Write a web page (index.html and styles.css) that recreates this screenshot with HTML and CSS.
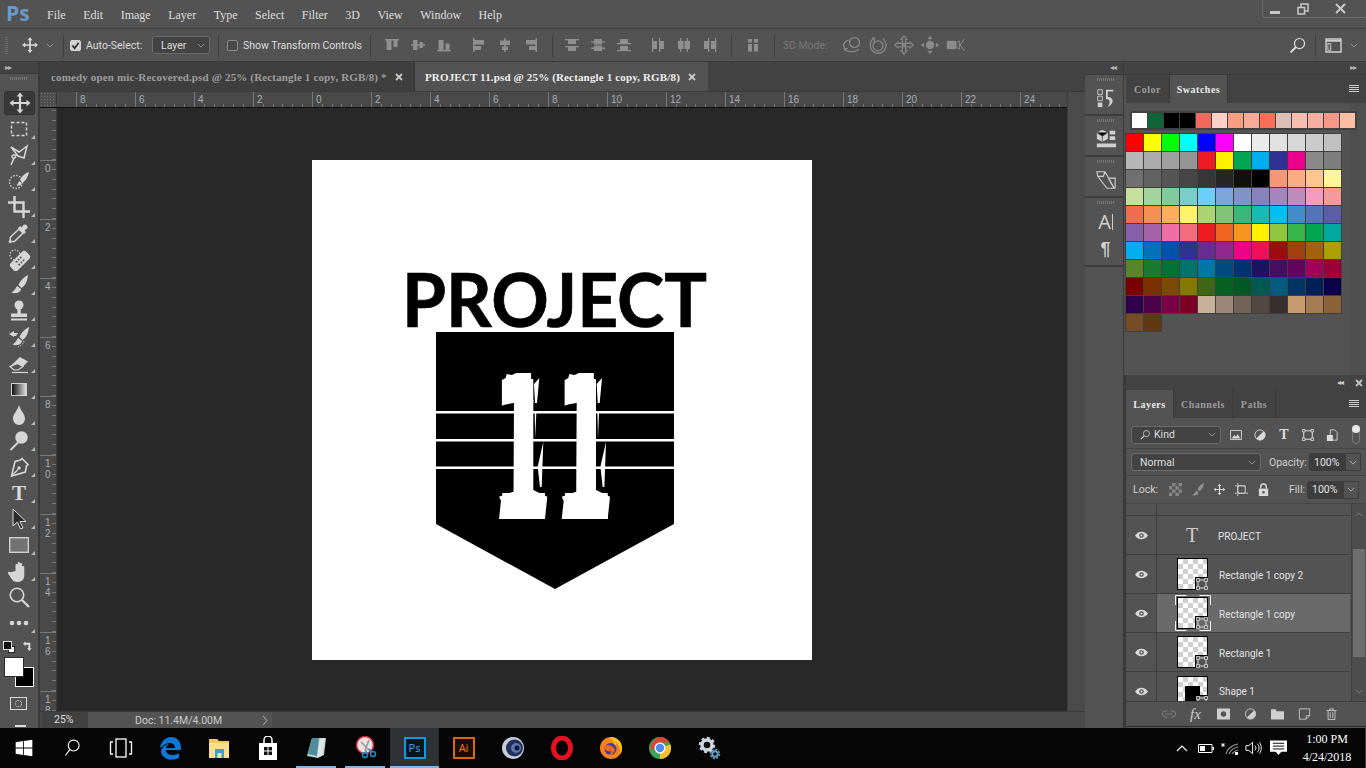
FILE: index.html
```html
<!DOCTYPE html>
<html lang="en">
<head>
<meta charset="utf-8">
<title>Photoshop - PROJECT 11.psd</title>
<link rel="stylesheet" href="styles.css">
</head>
<body>
<svg class="sprite" aria-hidden="true">
  <symbol id="move" viewBox="0 0 24 24"><path d="M12 1.5l3.4 4h-2.3V11h5.4V8.7l4 3.3-4 3.3V13h-5.4v5.5h2.3l-3.4 4-3.4-4h2.3V13H5.500v2.300l-4-3.300 4-3.300V11h5.400V5.500H8.600z" fill="currentColor"/></symbol>
  <symbol id="marquee" viewBox="0 0 24 24"><rect x="4.500" y="5.500" width="15" height="13" fill="none" stroke="currentColor" stroke-width="1.500" stroke-dasharray="3 2"/></symbol>
  <symbol id="lasso" viewBox="0 0 24 24"><path d="M4 4l8 5 8-6-3 12-6-2z" fill="none" stroke="currentColor" stroke-width="1.500"/><path d="M11 13c-2-2-7-1-6 1 1 2 5 1 3-1M7 15l-3 7" fill="none" stroke="currentColor" stroke-width="1.500"/></symbol>
  <symbol id="quick" viewBox="0 0 24 24"><circle cx="9" cy="13" r="6.500" fill="none" stroke="currentColor" stroke-width="1.300" stroke-dasharray="1.500 1.500"/><path d="M22 3c-4 1-8 5-9 8l2.500 2.500c3-1 5.500-6 6.500-10.500zM12.500 12c-1.500 1-1 3-3 4.500 2.500 .8 5-.5 5.300-2.500z" fill="currentColor"/></symbol>
  <symbol id="crop" viewBox="0 0 24 24"><path d="M7.500 1v15.500H23M1 7.500h15.500V23" fill="none" stroke="currentColor" stroke-width="2.400"/></symbol>
  <symbol id="dropper" viewBox="0 0 24 24"><path d="M12 8l4 4-8.500 8.500H4.300l-1 1-1-1 1-1v-3.200z" fill="none" stroke="currentColor" stroke-width="1.500"/><path d="M11 7l2-2 1.500 1.500 2-2.500c2-2 5.500 1.500 3.500 3.500l-2.500 2L19 11l-2 2z" fill="currentColor"/></symbol>
  <symbol id="heal" viewBox="0 0 24 24"><circle cx="8" cy="8" r="5" fill="none" stroke="currentColor" stroke-width="1.200" stroke-dasharray="1.400 1.400"/><rect x="2" y="9" width="22" height="10" rx="3" transform="rotate(-45 13 14)" fill="currentColor"/><g fill="#555" transform="rotate(-45 13 14)"><circle cx="10" cy="12" r="1"/><circle cx="13" cy="12" r="1"/><circle cx="16" cy="12" r="1"/><circle cx="10" cy="16" r="1"/><circle cx="13" cy="16" r="1"/><circle cx="16" cy="16" r="1"/></g></symbol>
  <symbol id="brush" viewBox="0 0 24 24"><path d="M21 2c-4 2-8 6-9.500 10l3 3c4-2 6-8 6.500-13zM10.500 13c-2 1-1.500 4-6 6.500 3.500 1.500 9 .5 9.500-3.500z" fill="currentColor"/></symbol>
  <symbol id="stamp" viewBox="0 0 24 24"><circle cx="12" cy="6" r="4.500" fill="currentColor"/><rect x="10.300" y="9" width="3.400" height="6" fill="currentColor"/><path d="M4 14.500h16v3.500H4zM4 19.500h16v2H4z" fill="currentColor"/></symbol>
  <symbol id="hist" viewBox="0 0 24 24"><path d="M22 2c-4 2-8 6-9.500 10l3 3c4-2 6-8 6.500-13zM11.500 13c-2 1-1.500 4-6 6.500 3.500 1.500 9 .5 9.500-3.500z" fill="currentColor"/><path d="M2 9l5-3v2h4l-2 3H7v1z" fill="currentColor"/><path d="M17 16c-1 3-3 5-6 6" fill="none" stroke="currentColor" stroke-dasharray="1.300 1.300"/></symbol>
  <symbol id="eraser" viewBox="0 0 24 24"><path d="M3 15.500L13 6l8 4.500-5 5z" fill="currentColor"/><path d="M3 15.500l4 3.500h4l5-3.500-5.500-3z" fill="#555" stroke="currentColor" stroke-width="1.200"/><path d="M5 21.500h16" stroke="currentColor" stroke-width="1.200"/></symbol>
  <symbol id="drop" viewBox="0 0 24 24"><path d="M12 2c1.500 6 6 8.500 6 14a6 6 0 0 1-12 0c0-5.500 4.500-8 6-14z" fill="currentColor"/></symbol>
  <symbol id="dodge" viewBox="0 0 24 24"><circle cx="14.500" cy="8.500" r="6.200" fill="currentColor"/><path d="M11 13.500L3.500 21" stroke="currentColor" stroke-width="2"/></symbol>
  <symbol id="pen" viewBox="0 0 24 24"><path d="M15 3.500l6 6-1.500 1.500-1.200 6L4.500 21 8 6.500l5.500-1.500z" fill="none" stroke="currentColor" stroke-width="1.600"/><path d="M5 20.500l6-6" stroke="currentColor" stroke-width="1.200"/><circle cx="12" cy="13" r="1.700" fill="currentColor"/></symbol>
  <symbol id="arrow" viewBox="0 0 24 24"><path d="M6 2v17l4.500-4 3 7 2.500-1-3-6.500h6z" fill="#2b2b2b" stroke="#d8d8d8" stroke-width="1"/></symbol>
  <symbol id="rectangle" viewBox="0 0 24 24"><rect x="2.700" y="4.700" width="18.600" height="14.600" fill="#727272" stroke="#cfcfcf" stroke-width="1.400"/></symbol>
  <symbol id="hand" viewBox="0 0 24 24"><path d="M8.500 12V6a1.100 1.100 0 0 1 2.200 0v5-7a1.100 1.100 0 0 1 2.200 0v7-6a1.100 1.100 0 0 1 2.200 0v7-4a1.100 1.100 0 0 1 2.200 0v8c0 5-3 7-7 7-3 0-4.500-1-6-3.500l-3.200-5c-.6-1.500 1.200-2.500 2.400-1.200z" fill="currentColor"/></symbol>
  <symbol id="zoom" viewBox="0 0 24 24"><circle cx="10" cy="10" r="6.700" fill="none" stroke="currentColor" stroke-width="1.600"/><path d="M15 15l7 7" stroke="currentColor" stroke-width="2.400"/></symbol>
  <symbol id="dots" viewBox="0 0 24 24"><circle cx="5" cy="12" r="2.300" fill="currentColor"/><circle cx="12" cy="12" r="2.300" fill="currentColor"/><circle cx="19" cy="12" r="2.300" fill="currentColor"/></symbol>
  <symbol id="chev" viewBox="0 0 10 6"><path d="M1 1l4 4 4-4" fill="none" stroke="currentColor"/></symbol>
  <symbol id="x" viewBox="0 0 8 8"><path d="M1 1l6 6M7 1L1 7" stroke="currentColor" stroke-width="1.800"/></symbol>
  <symbol id="al1" viewBox="0 0 14 14"><path d="M0 1h14v1.500H0zM1.500 2.500h5V12h-5zM8.500 2.500h4V9h-4z" fill="currentColor"/></symbol>
  <symbol id="al2" viewBox="0 0 14 14"><path d="M0 6.200h14v1.500H0zM2 2h4.500v10H2zM8.500 4H12v6H8.500z" fill="currentColor"/></symbol>
  <symbol id="al3" viewBox="0 0 14 14"><path d="M0 12h14v1.500H0zM1.500 2h5v10h-5zM8.500 5.500h4V12h-4z" fill="currentColor"/></symbol>
  <symbol id="al4" viewBox="0 0 14 14"><path d="M1 0h1.500v14H1zM2.500 2H12v4.500H2.500zM2.500 8H9v4H2.500z" fill="currentColor"/></symbol>
  <symbol id="al5" viewBox="0 0 14 14"><path d="M6.200 0h1.500v14H6.200zM2 2.500h10V7H2zM4 8.500h6V12H4z" fill="currentColor"/></symbol>
  <symbol id="al6" viewBox="0 0 14 14"><path d="M11.500 0H13v14h-1.500zM2 2h9.500v4.500H2zM5 8h6.500v4H5z" fill="currentColor"/></symbol>
  <symbol id="ds1" viewBox="0 0 14 14"><path d="M0 1h14v1.300H0zM3 2.300h8V6H3zM0 8h14v1.300H0zM3 9.300h8V13H3z" fill="currentColor"/></symbol>
  <symbol id="ds2" viewBox="0 0 14 14"><path d="M0 3.200h14v1.300H0zM3 1h8v5.500H3zM0 9.600h14v1.300H0zM3 7.500h8V13H3z" fill="currentColor"/></symbol>
  <symbol id="ds3" viewBox="0 0 14 14"><path d="M3 1h8v4H3zM0 5h14v1.300H0zM3 8h8v4H3zM0 12h14v1.300H0z" fill="currentColor"/></symbol>
  <symbol id="ds4" viewBox="0 0 14 14"><path d="M1 0h1.300v14H1zM2.300 3H6v8H2.300zM8 0h1.300v14H8zM9.300 3H13v8H9.300z" fill="currentColor"/></symbol>
  <symbol id="ds5" viewBox="0 0 14 14"><path d="M3 0h1.300v14H3zM1 3h5.500v8H1zM9.600 0h1.300v14H9.600zM7.500 3H13v8H7.500z" fill="currentColor"/></symbol>
  <symbol id="ds6" viewBox="0 0 14 14"><path d="M1 3h4v8H1zM5 0h1.300v14H5zM8 3h4v8H8zM12 0h1.300v14H12z" fill="currentColor"/></symbol>
  <symbol id="dsp" viewBox="0 0 14 14"><path d="M2 1h4v3.500H2zM8 1h4v3.500H8zM2 6h4v7.500H2zM8 6h4v7.500H8z" fill="currentColor"/></symbol>
  <symbol id="d3a" viewBox="0 0 24 24"><circle cx="15" cy="9" r="6" fill="none" stroke="currentColor" stroke-width="1.500"/><path d="M8 6c-4 1-7 5-6 8M3 17c3 4 14 4 17 0M2 13l1 4 4-1" fill="none" stroke="currentColor" stroke-width="1.500"/></symbol>
  <symbol id="d3b" viewBox="0 0 24 24"><circle cx="12" cy="13" r="6" fill="none" stroke="currentColor" stroke-width="1.500"/><path d="M7 4c-7 5-5 17 5 18 9 0 13-11 6-18M5 3l3 1-1 4" fill="none" stroke="currentColor" stroke-width="1.500"/></symbol>
  <symbol id="d3c" viewBox="0 0 24 24"><path d="M12 1l3.500 4H14v4l-2 2-2-2V5H8.500zM12 23l3.500-4H14v-4l-2-2-2 2v4H8.500zM1 12l4-3.500V10h4l2 2-2 2H5v1.500zM23 12l-4-3.500V10h-4l-2 2 2 2h4v1.500z" fill="none" stroke="currentColor" stroke-width="1.300"/></symbol>
  <symbol id="d3d" viewBox="0 0 24 24"><circle cx="12" cy="12" r="5" fill="currentColor"/><path d="M12 1l3 4H9zM12 23l3-4H9zM1 12l4-3v6zM23 12l-4-3v6z" fill="currentColor"/></symbol>
  <symbol id="d3e" viewBox="0 0 24 24"><rect x="1" y="7" width="11" height="10" fill="currentColor"/><path d="M12 10l4-3v10l-4-3zM22 5l-5 7 5 7" fill="none" stroke="currentColor" stroke-width="1.200"/></symbol>
  <symbol id="vec" viewBox="0 0 12 12"><path d="M2 2h8v8H2z" fill="none" stroke="#d9d9d9"/><path d="M.5 .5h3v3h-3zM8.500 .5h3v3h-3zM.5 8.500h3v3h-3zM8.500 8.500h3v3h-3z" fill="#535353" stroke="#d9d9d9" stroke-width=".8"/></symbol>
  <symbol id="eye" viewBox="0 0 16 12"><path d="M1 6c3-5.500 11-5.500 14 0-3 5.500-11 5.500-14 0z" fill="#dadada"/><circle cx="8" cy="6" r="2.500" fill="#535353"/><circle cx="8" cy="6" r="1.200" fill="#dadada"/></symbol>
  <symbol id="brackets" viewBox="0 0 36 36"><path d="M.5 10V.5h11M24.500 .5h11V10M35.500 26v9.500h-11M11.500 35.500H.5V26" fill="none" stroke="#f2f2f2"/></symbol>
</svg>

<div class="app">
  <header class="menubar">
    <span class="ps-logo">Ps</span>
    <nav class="menu"><span>File</span><span>Edit</span><span>Image</span><span>Layer</span><span>Type</span><span>Select</span><span>Filter</span><span>3D</span><span>View</span><span>Window</span><span>Help</span></nav>
    <div class="winctl">
      <svg class="wc wc-min" viewBox="0 0 10 4"><rect y="1" width="10" height="3" fill="currentColor"/></svg>
      <svg class="wc wc-max" viewBox="0 0 12 12"><path d="M1 4.500h6.500V11H1zM4 4V1h7v7H8" fill="none" stroke="currentColor" stroke-width="1.500"/></svg>
      <svg class="wc wc-x" viewBox="0 0 11 11"><path d="M1 1l9 9M10 1l-9 9" stroke="currentColor" stroke-width="2"/></svg>
    </div>
  </header>

  <div class="options">
    <i class="opt-grip"></i>
    <svg class="opt-move"><use href="#move"/></svg>
    <svg class="opt-chev"><use href="#chev"/></svg>
    <i class="sep sep-a"></i>
    <span class="check on"><svg viewBox="0 0 10 10"><path d="M1.500 5l2.500 3 4.500-6" fill="none" stroke="#333" stroke-width="2"/></svg></span>
    <span class="lbl lbl-auto">Auto-Select:</span>
    <span class="select sel-layer">Layer<svg><use href="#chev"/></svg></span>
    <i class="sep sep-b"></i>
    <span class="check"></span>
    <span class="lbl lbl-show">Show Transform Controls</span>
    <i class="sep sep-c"></i>
    <span class="aligns ml14"><svg><use href="#al1"/></svg><svg><use href="#al2"/></svg><svg><use href="#al3"/></svg></span>
    <span class="aligns ml21"><svg><use href="#al4"/></svg><svg><use href="#al5"/></svg><svg><use href="#al6"/></svg></span>
    <i class="sep sep-c"></i>
    <span class="aligns ml12"><svg><use href="#ds1"/></svg><svg><use href="#ds2"/></svg><svg><use href="#ds3"/></svg></span>
    <span class="aligns ml20"><svg><use href="#ds4"/></svg><svg><use href="#ds5"/></svg><svg><use href="#ds6"/></svg></span>
    <i class="sep sep-c"></i>
    <span class="aligns ml14"><svg><use href="#dsp"/></svg></span>
    <i class="sep sep-c"></i>
    <span class="lbl-3d">3D Mode:</span>
    <span class="modes"><svg><use href="#d3a"/></svg><svg><use href="#d3b"/></svg><svg><use href="#d3c"/></svg><svg><use href="#d3d"/></svg><svg><use href="#d3e"/></svg></span>
    <svg class="opt-search"><use href="#zoom"/></svg>
    <i class="sep sep-d"></i>
    <svg class="opt-work" viewBox="0 0 18 16"><path d="M1 1h16v14H1z" fill="none" stroke="currentColor" stroke-width="1.500"/><path d="M1 3h16" stroke="currentColor" stroke-width="2"/><rect x="3" y="6" width="3" height="7" fill="none" stroke="currentColor"/></svg>
    <svg class="opt-chev2"><use href="#chev"/></svg>
  </div>

  <div class="workspace">
    <aside class="tools">
      <div class="collapse"><span class="tri">▸▸</span></div>
      <i class="grip tool-grip"></i>
      <div class="tool active"><svg><use href="#move"/></svg></div>
      <div class="tool corner"><svg><use href="#marquee"/></svg></div>
      <div class="tool corner"><svg><use href="#lasso"/></svg></div>
      <div class="tool corner"><svg><use href="#quick"/></svg></div>
      <div class="tool corner"><svg><use href="#crop"/></svg></div>
      <div class="tool corner"><svg><use href="#dropper"/></svg></div>
      <div class="tool corner"><svg><use href="#heal"/></svg></div>
      <div class="tool corner"><svg><use href="#brush"/></svg></div>
      <div class="tool corner"><svg><use href="#stamp"/></svg></div>
      <div class="tool corner"><svg><use href="#hist"/></svg></div>
      <div class="tool corner"><svg><use href="#eraser"/></svg></div>
      <div class="tool corner"><i class="gradient"></i></div>
      <div class="tool corner"><svg><use href="#drop"/></svg></div>
      <div class="tool corner"><svg><use href="#dodge"/></svg></div>
      <div class="tool corner"><svg><use href="#pen"/></svg></div>
      <div class="tool corner"><span class="tool-t">T</span></div>
      <div class="tool corner"><svg><use href="#arrow"/></svg></div>
      <div class="tool corner"><svg><use href="#rectangle"/></svg></div>
      <div class="tool corner"><svg><use href="#hand"/></svg></div>
      <div class="tool"><svg><use href="#zoom"/></svg></div>
      <div class="tool corner"><svg><use href="#dots"/></svg></div>
      <div class="colors">
        <i class="mini-bg"></i><i class="mini-fg"></i>
        <svg class="swap" viewBox="0 0 12 12"><path d="M1 3l3-2.500V2h5v6h1.500L8 11 5.500 8H7V4H4v1.500z" fill="currentColor"/></svg>
        <i class="bgc"></i><i class="fgc"></i>
      </div>
      <div class="mask"><i><b></b></i></div>
      <div class="screenmode"></div>
    </aside>

    <main class="doc">
      <div class="tabs">
        <div class="tab"><span>comedy open mic-Recovered.psd @ 25% (Rectangle 1 copy, RGB/8) *</span><svg><use href="#x"/></svg></div>
        <div class="tab current"><span>PROJECT 11.psd @ 25% (Rectangle 1 copy, RGB/8)</span><svg><use href="#x"/></svg></div>
      </div>
      <div class="docbody">
        <div class="docview">
          <div class="hruler">
            <i class="rcorner"></i>
            <div class="hticks"><span>8</span><span>6</span><span>4</span><span>2</span><span>0</span><span>2</span><span>4</span><span>6</span><span>8</span><span>10</span><span>12</span><span>14</span><span>16</span><span>18</span><span>20</span><span>22</span><span>24</span></div>
          </div>
          <div class="vsplit">
            <div class="vruler"><i class="vstart"></i><span>0</span><span>2</span><span>4</span><span>6</span><span>8</span><span>1<br>0</span><span>1<br>2</span><span>1<br>4</span><span>1<br>6</span><span>1<br>8</span></div>
            <div class="pasteboard">
              <div class="artboard">
                <svg class="logo" viewBox="0 0 500 500">
                  <text class="logo-project" x="90" y="167" textLength="305" lengthAdjust="spacingAndGlyphs">PROJECT</text>
                  <polygon points="124,172 362,172 362,364 243,429 124,364"/>
                  <g fill="#fff">
                    <rect x="124" y="251" width="238" height="2.500"/>
                    <rect x="124" y="279" width="238" height="2.500"/>
                    <rect x="124" y="306.500" width="238" height="2.500"/>
                    <text class="logo-num" transform="translate(180.500 359) scale(.42 1)">11</text>
                    <g>
                      <polygon points="194.700,214 221.300,219.300 221.300,243.300 203,242.700 190.700,245 190.700,228.300"/>
                      <polygon points="202,240 221.300,240 221.300,335 201.500,335"/>
                      <polygon points="187,359 189,340.700 187,336.700 201.300,331.700 221.300,330 235.300,336.700 233,359"/>
                      <polygon points="227.300,218 222,224 223,243 225,243"/>
                      <polygon points="222.700,253 224.300,253 223.300,278"/>
                      <polygon points="231.300,281.700 225.700,306.700 228,327.300 229.700,326.700"/>
                    </g>
                    <g>
                      <polygon points="257.400,214 284,219.300 284,243.300 265.700,242.700 253.400,245 253.400,228.300"/>
                      <polygon points="264.700,240 284,240 284,335 264.200,335"/>
                      <polygon points="249.700,359 251.700,340.700 249.700,336.700 264,331.700 284,330 298,336.700 295.700,359"/>
                      <polygon points="290,218 284.700,224 285.700,243 287.700,243"/>
                      <polygon points="285.400,253 287,253 286,278"/>
                      <polygon points="294,281.700 288.400,306.700 290.700,327.300 292.400,326.700"/>
                    </g>
                  </g>
                </svg>
              </div>
            </div>
          </div>
        </div>
        <div class="vscroll"></div>
      </div>
      <div class="status">
        <span class="st-zoom">25%</span>
        <span class="st-doc">Doc: 11.4M/4.00M<svg viewBox="0 0 6 12"><path d="M1 1l4 5-4 5" fill="none" stroke="currentColor"/></svg></span>
      </div>
    </main>

    <aside class="dock">
      <div class="dock-top"><span class="arrows-l">◂◂</span></div>
      <div class="dock-group h40"><i class="grip"></i>
        <svg class="dock-ic" viewBox="0 0 24 24"><path d="M3 3h5v5H3zM3 10h5v5H3z" fill="none" stroke="currentColor"/><path d="M3 17h5v5H3z" fill="currentColor"/><path d="M12 3h8v2h-6v6c4 0 6 3 5 6-1 2-3 4-6 5 2-2 3-4 3-6s-2-3-4-3z" fill="currentColor"/></svg>
      </div>
      <div class="dock-group h40"><i class="grip"></i>
        <svg class="dock-ic" viewBox="0 0 24 24"><path d="M8 2l6 3v7l-6 3-6-3V5z" fill="currentColor"/><path d="M8 9v6M2 5l6 4 6-4" stroke="#555"/><path d="M16 3h6v4h-6zM16 9h6v4h-6zM2 17h21v4H2z" fill="currentColor"/></svg>
      </div>
      <div class="dock-group h40"><i class="grip"></i>
        <svg class="dock-ic" viewBox="0 0 24 24"><path d="M2 3h9l10 18H13L3 8zM2 3l1 5M11 3l-2 5H3M15 10h7v11M22 21h-7" fill="none" stroke="currentColor" stroke-width="1.200"/><path d="M15 11l5 9" stroke="currentColor"/></svg>
      </div>
      <div class="dock-group h68"><i class="grip"></i>
        <span class="dock-a">A<b></b></span>
        <span class="dock-p">¶</span>
      </div>
    </aside>

    <aside class="panels">
      <div class="panel-head"><span class="arrows-r">▸▸</span></div>
      <section class="swatches">
        <div class="ptabs">
          <span class="ptab t-color">Color</span>
          <span class="ptab t-swatches on">Swatches</span>
          <span class="burger"></span>
        </div>
        <div class="sw-body">
          <div class="recent">
            <i style="background:#fff"></i><i style="background:#0f6538"></i><i style="background:#000"></i><i style="background:#000"></i><i style="background:#f1695c"></i><i style="background:#fbd0c5"></i><i style="background:#f99f82"></i><i style="background:#f7ab99"></i><i style="background:#f66f58"></i><i style="background:#dcc0b3"></i><i style="background:#f9bcb0"></i><i style="background:#f6aea0"></i><i style="background:#f8968a"></i><i style="background:#f9bea4"></i>
          </div>
          <div class="swgrid">
            <i style="background:#f00"></i><i style="background:#ff0"></i><i style="background:#0f0"></i><i style="background:#0ff"></i><i style="background:#00f"></i><i style="background:#f0f"></i><i style="background:#fff"></i><i style="background:#ebebeb"></i><i style="background:#e1e1e1"></i><i style="background:#d7d7d7"></i><i style="background:#cbcbcb"></i><i style="background:#c0c0c0"></i>
            <i style="background:#b7b7b7"></i><i style="background:#acacac"></i><i style="background:#a0a0a0"></i><i style="background:#959595"></i><i style="background:#ed1c24"></i><i style="background:#fff200"></i><i style="background:#00a651"></i><i style="background:#00aeef"></i><i style="background:#2e3192"></i><i style="background:#ec008c"></i><i style="background:#898989"></i><i style="background:#7d7d7d"></i>
            <i style="background:#707070"></i><i style="background:#626262"></i><i style="background:#555"></i><i style="background:#464646"></i><i style="background:#363636"></i><i style="background:#262626"></i><i style="background:#111"></i><i style="background:#000"></i><i style="background:#f7977a"></i><i style="background:#fbad82"></i><i style="background:#fdc68c"></i><i style="background:#fff799"></i>
            <i style="background:#c6df9c"></i><i style="background:#a4d49d"></i><i style="background:#81ca9d"></i><i style="background:#7bcdc9"></i><i style="background:#6ccff7"></i><i style="background:#7ca6d8"></i><i style="background:#8293ca"></i><i style="background:#8881be"></i><i style="background:#a286bd"></i><i style="background:#bc8cbf"></i><i style="background:#f49bc1"></i><i style="background:#f5999d"></i>
            <i style="background:#f16c4d"></i><i style="background:#f68e54"></i><i style="background:#fbaf5a"></i><i style="background:#fff467"></i><i style="background:#acd372"></i><i style="background:#7dc473"></i><i style="background:#39b778"></i><i style="background:#16bcb4"></i><i style="background:#00bff3"></i><i style="background:#438ccb"></i><i style="background:#5573b7"></i><i style="background:#5e5ca7"></i>
            <i style="background:#855fa8"></i><i style="background:#a763a9"></i><i style="background:#ef6ea8"></i><i style="background:#f16d7e"></i><i style="background:#ee1d24"></i><i style="background:#f16522"></i><i style="background:#f7941d"></i><i style="background:#fff100"></i><i style="background:#8fc63d"></i><i style="background:#37b44a"></i><i style="background:#00a650"></i><i style="background:#00a99e"></i>
            <i style="background:#00aeef"></i><i style="background:#0072bc"></i><i style="background:#0054a5"></i><i style="background:#2f3192"></i><i style="background:#652c91"></i><i style="background:#91278f"></i><i style="background:#ed008c"></i><i style="background:#ee105a"></i><i style="background:#9d0a0f"></i><i style="background:#a1410d"></i><i style="background:#a36209"></i><i style="background:#aba000"></i>
            <i style="background:#588528"></i><i style="background:#197b30"></i><i style="background:#007236"></i><i style="background:#00736a"></i><i style="background:#0076a4"></i><i style="background:#004a80"></i><i style="background:#003370"></i><i style="background:#1d1363"></i><i style="background:#450e61"></i><i style="background:#62055f"></i><i style="background:#9e005c"></i><i style="background:#9d0039"></i>
            <i style="background:#790000"></i><i style="background:#7b3000"></i><i style="background:#7c4900"></i><i style="background:#827a00"></i><i style="background:#3e6617"></i><i style="background:#045f20"></i><i style="background:#005824"></i><i style="background:#005951"></i><i style="background:#005b7e"></i><i style="background:#003562"></i><i style="background:#002056"></i><i style="background:#0c004b"></i>
            <i style="background:#30004a"></i><i style="background:#4b0048"></i><i style="background:#7a0045"></i><i style="background:#7a0026"></i><i style="background:#c7b299"></i><i style="background:#998675"></i><i style="background:#736357"></i><i style="background:#534741"></i><i style="background:#362f2d"></i><i style="background:#c69c6d"></i><i style="background:#a67c52"></i><i style="background:#8c6239"></i>
            <i style="background:#754c24"></i><i style="background:#603913"></i>
          </div>
        </div>
      </section>
      <div class="panel-head2"><span class="ph-arrows">◂◂</span><svg><use href="#x"/></svg></div>
      <section class="layers">
        <div class="ptabs ptabs-l">
          <span class="ptab t-layers on">Layers</span>
          <span class="ptab t-channels">Channels</span>
          <span class="ptab t-paths">Paths</span>
          <span class="burger"></span>
        </div>
        <div class="l-row l-filter">
          <span class="select sel-kind"><svg class="kind-s"><use href="#zoom"/></svg>Kind<svg class="s-chev"><use href="#chev"/></svg></span>
          <span class="f-icons">
            <svg viewBox="0 0 14 12"><path d="M.7 .7h12.600v10.600H.7z" fill="none" stroke="currentColor"/><path d="M2 10l3-4 2 2 2-3 3 5z" fill="currentColor"/></svg>
            <svg viewBox="0 0 14 14"><circle cx="7" cy="7" r="6" fill="#555" stroke="currentColor"/><path d="M11.300 2.700a6 6 0 0 1-8.500 8.500z" fill="currentColor"/></svg>
            <span class="f-t">T</span>
            <svg viewBox="0 0 14 14"><path d="M2 2h10v10H2z" fill="none" stroke="currentColor" stroke-width="1.200"/><path d="M.5 .5h3v3h-3zM10.500 .5h3v3h-3zM.5 10.500h3v3h-3zM10.500 10.500h3v3h-3z" fill="#535353" stroke="currentColor"/></svg>
            <svg viewBox="0 0 14 14"><path d="M5 1h5l3 3v9H5z" fill="none" stroke="currentColor"/><path d="M1 7h7v7H1z" fill="currentColor"/></svg>
          </span>
          <span class="toggle"><b></b></span>
        </div>
        <div class="l-row l-blend">
          <span class="select sel-normal">Normal<svg class="s-chev"><use href="#chev"/></svg></span>
          <span class="lbl-r lbl-op">Opacity:</span>
          <span class="num">100%<i><svg><use href="#chev"/></svg></i></span>
        </div>
        <div class="l-row l-lock">
          <span class="lbl-r lbl-lock">Lock:</span>
          <span class="lock-icons">
            <svg viewBox="0 0 14 14"><path d="M0 0h14v14H0z" fill="#888"/><path d="M0 0h3.500v3.500H0zM7 0h3.500v3.500H7zM3.500 3.500H7V7H3.500zM10.500 3.500H14V7h-3.500zM0 7h3.500v3.500H0zM7 7h3.500v3.500H7zM3.500 10.500H7V14H3.500zM10.500 10.500H14V14h-3.500z" fill="#555"/></svg>
            <svg class="dim" viewBox="0 0 14 14"><path d="M14 0c-3 1-6 4-7 7l2 2c3-1.500 4.500-5.500 5-9zM6 8c-1.500 1-1 3-5 5 3 1.200 7 .5 7-3z" fill="currentColor"/></svg>
            <svg viewBox="0 0 24 24"><use href="#move"/></svg>
            <svg viewBox="0 0 14 14"><path d="M3 3h8v8H3z" fill="none" stroke="currentColor"/><path d="M3 0v14M0 11h14M0 3h9l2 2" fill="none" stroke="currentColor" stroke-dasharray="2 1"/></svg>
            <svg viewBox="0 0 14 14"><path d="M2 6h10v8H2z" fill="currentColor"/><path d="M4 6V4a3 3 0 0 1 6 0v2" fill="none" stroke="currentColor" stroke-width="1.500"/><circle cx="7" cy="10" r="1.300" fill="#555"/></svg>
          </span>
          <span class="lbl-r lbl-fill">Fill:</span>
          <span class="num">100%<i><svg><use href="#chev"/></svg></i></span>
        </div>
        <div class="l-list">
          <div class="l-items">
            <div class="layer l-partial"><span class="l-eye"></span><span class="l-main"></span></div>
            <div class="layer"><span class="l-eye"><svg><use href="#eye"/></svg></span><span class="l-main"><span class="l-tglyph">T</span><span class="l-name">PROJECT</span></span></div>
            <div class="layer"><span class="l-eye"><svg><use href="#eye"/></svg></span><span class="l-main"><span class="thumb"><svg class="badge"><use href="#vec"/></svg></span><span class="l-name">Rectangle 1 copy 2</span></span></div>
            <div class="layer sel"><span class="l-eye"><svg><use href="#eye"/></svg></span><span class="l-main"><span class="thumb"><svg class="badge"><use href="#vec"/></svg><svg class="corners"><use href="#brackets"/></svg></span><span class="l-name">Rectangle 1 copy</span></span></div>
            <div class="layer"><span class="l-eye"><svg><use href="#eye"/></svg></span><span class="l-main"><span class="thumb"><svg class="badge"><use href="#vec"/></svg></span><span class="l-name">Rectangle 1</span></span></div>
            <div class="layer l-cut"><span class="l-eye"><svg><use href="#eye"/></svg></span><span class="l-main"><span class="thumb"><i class="mini-shield"></i><svg class="badge"><use href="#vec"/></svg></span><span class="l-name">Shape 1</span></span></div>
          </div>
          <div class="l-scroll">
            <svg class="sc-up"><use href="#chev"/></svg>
            <i class="sc-thumb"></i>
            <svg class="sc-down"><use href="#chev"/></svg>
          </div>
        </div>
        <div class="l-foot">
          <svg class="dim2" viewBox="0 0 16 10"><path d="M6 1.500H4a3.500 3.500 0 0 0 0 7h2M10 1.500h2a3.500 3.500 0 0 1 0 7h-2M4 5h8" fill="none" stroke="currentColor"/></svg>
          <span class="fx">fx</span>
          <svg viewBox="0 0 14 12"><path fill-rule="evenodd" d="M0 0h14v12H0zM7 3a3 3 0 1 0 .01 0z" fill="currentColor"/></svg>
          <svg viewBox="0 0 14 14"><circle cx="7" cy="7" r="6" fill="#555" stroke="currentColor"/><path d="M11.300 2.700a6 6 0 0 1-8.500 8.500z" fill="currentColor"/></svg>
          <svg viewBox="0 0 14 12"><path d="M0 1h5l1 2h8v9H0z" fill="currentColor"/></svg>
          <svg viewBox="0 0 14 14"><path d="M1 1h12v8l-4 4H1z" fill="none" stroke="currentColor"/><path d="M13 9H9v4" fill="none" stroke="currentColor"/></svg>
          <svg viewBox="0 0 14 14"><path d="M1 3h12M5 3V1h4v2M3 3v10.500h8V3M5.500 5v7M8.500 5v7" fill="none" stroke="currentColor"/></svg>
        </div>
      </section>
    </aside>
  </div>

  <footer class="taskbar">
    <div class="tb-cell"><svg class="tb-ic start" viewBox="0 0 24 24"><path d="M2 5l9-1.300V11.500H2zM12 3.500l10-1.500v9.500H12zM2 12.500h9v7.800L2 19zM12 12.500h10V22l-10-1.500z" fill="#fff"/></svg></div>
    <div class="tb-cell"><svg class="tb-ic search" viewBox="0 0 24 24"><circle cx="14" cy="9" r="6.500" fill="none" stroke="#fff" stroke-width="1.300"/><path d="M9.500 14L4 21" stroke="#fff" stroke-width="1.400"/></svg></div>
    <div class="tb-cell tb-tv"><svg class="tb-ic" viewBox="0 0 24 24"><rect x="7" y="3" width="10" height="18" fill="none" stroke="#fff" stroke-width="1.300"/><path d="M4 6H1.500v12H4M20 6h2.500v12H20" fill="none" stroke="#fff" stroke-width="1.300"/></svg></div>
    <div class="tb-cell"><svg class="tb-ic" viewBox="0 0 24 24"><path d="M2 12C3 5 8 1 13 1c6 0 10 4 10 11v2H8c0 5 7 7 13 3v5c-6 3-14 2-17-3 0 0-1-2-1-4 1-4 4-6 7-7 1 0 0 1 0 1-1 .5-2 2-2 3h9c0-5-7-7-12-2z" fill="#0e78d5"/></svg></div>
    <div class="tb-cell"><svg class="tb-ic" viewBox="0 0 24 24"><path d="M2 3h8l2 2h10v17H2z" fill="#f3c95c"/><path d="M2 7h20v15H2z" fill="#fbe08c"/><path d="M8 13h9v9h-2.500v-5h-4v5H8z" fill="#30a3e6"/></svg></div>
    <div class="tb-cell"><svg class="tb-ic" viewBox="0 0 24 24"><path d="M3 7h18v17H3z" fill="#fff"/><path d="M8 7V4a4 4 0 0 1 8 0v3" fill="none" stroke="#fff" stroke-width="1.500"/><path d="M8 11h3.500v3.500H8zM12.500 11H16v3.500h-3.500zM8 15.500h3.500V19H8zM12.500 15.500H16V19h-3.500z" fill="#111"/></svg></div>
    <div class="tb-cell"><svg class="tb-ic" viewBox="0 0 24 24"><path d="M7 2h14l-2 17-6 3-11-2z" fill="#bcd3d9"/><path d="M7 2l-4 16 9 2 2-18z" fill="#4f8d9a"/><path d="M15 3h5l-3 16-5 2z" fill="#dce8e8"/></svg></div>
    <div class="tb-cell"><svg class="tb-ic" viewBox="0 0 24 24"><circle cx="11" cy="9" r="8.500" fill="#f2dfe0" stroke="#c8283a" stroke-width="1.500"/><path d="M7 6l9 9M15 4L11 14" stroke="#999" stroke-width="1.600"/><circle cx="11" cy="19" r="2.500" fill="none" stroke="#1c8fc8" stroke-width="1.500"/><circle cx="19" cy="18" r="2.500" fill="none" stroke="#1c8fc8" stroke-width="1.500"/><path d="M12 14l0 3M15 13l3 3" stroke="#1c8fc8" stroke-width="1.500"/></svg></div>
    <div class="tb-cell tb-active"><span class="app-tile app-ps">Ps</span></div>
    <div class="tb-cell"><span class="app-tile app-ai">Ai</span></div>
    <div class="tb-cell"><svg class="tb-ic" viewBox="0 0 24 24"><circle cx="12" cy="12" r="11" fill="#c8ccd6"/><circle cx="13.500" cy="12" r="8.500" fill="#20315f"/><circle cx="15" cy="12" r="5" fill="#5f77a9"/><circle cx="16" cy="12" r="2.500" fill="#111a38"/></svg></div>
    <div class="tb-cell"><svg class="tb-ic" viewBox="0 0 24 24"><ellipse cx="12" cy="12" rx="8.500" ry="10" fill="none" stroke="#e0131f" stroke-width="5"/></svg></div>
    <div class="tb-cell"><svg class="tb-ic" viewBox="0 0 24 24"><circle cx="12" cy="12" r="11" fill="#f7831d"/><path d="M12 1c6 0 11 5 11 11 0 3-1 5-2 7 1-5-1-10-4-12 0 1 0 2-1 3-1-4-3-7-6-8z" fill="#fbbf24"/><circle cx="11.500" cy="13" r="6" fill="#3d3fa0"/><path d="M2 9c2 1 5 1 7 0 3 0 6 2 7 5-1 4-5 6-8 5 3 0 5-2 4-4-2 1-5 0-6-2z" fill="#f36a1a"/></svg></div>
    <div class="tb-cell"><svg class="tb-ic" viewBox="0 0 24 24"><circle cx="12" cy="12" r="11" fill="#3aa757"/><path d="M12 12L22.500 8.500A11 11 0 0 1 12 23z" fill="#fbc02d"/><path d="M12 1a11 11 0 0 1 9.500 5.500H12L4.600 18A11 11 0 0 1 12 1z" fill="#db4437"/><path d="M1.500 15L8 12l-3 7z" fill="#3aa757"/><circle cx="12" cy="12" r="5.500" fill="#fff"/><circle cx="12" cy="12" r="4.200" fill="#4e8bf5"/></svg></div>
    <div class="tb-cell"><svg class="tb-ic" viewBox="0 0 24 24"><circle cx="10" cy="9" r="5" fill="none" stroke="#cfd8e0" stroke-width="3.500"/><circle cx="10" cy="9" r="7.200" fill="none" stroke="#cfd8e0" stroke-width="2" stroke-dasharray="3 2.600"/><circle cx="18" cy="18" r="2.700" fill="none" stroke="#69a0c4" stroke-width="2"/><circle cx="18" cy="18" r="4.500" fill="none" stroke="#69a0c4" stroke-width="1.500" stroke-dasharray="2 1.500"/></svg></div>
    <div class="tray">
      <svg class="t-up" viewBox="0 0 12 7"><path d="M1 6l5-5 5 5" fill="none" stroke="#fff" stroke-width="1.200"/></svg>
      <svg class="t-bat" viewBox="0 0 16 9"><path d="M.5 .5h13.500v8H.5z" fill="none" stroke="#fff"/><path d="M2 2h5v5H2z" fill="#fff"/><path d="M14.500 3H16v3h-1.500z" fill="#fff"/></svg>
      <svg class="t-wifi" viewBox="0 0 20 16"><path d="M1 5h4M3 3v4M1.600 3.500l2.800 3M4.400 3.500L1.600 6.500" stroke="#fff" stroke-width=".8"/><path d="M6 14c1-5 6-9 12-10M9 14c1-3 5-6 9-7M12 14c1-2 3-3 6-4" fill="none" stroke="#999" stroke-width="1.100"/><path d="M15 12h3v3h-3z" fill="#fff"/></svg>
      <svg class="t-vol" viewBox="0 0 18 14"><path d="M1 4.500h3L8 1v12L4 9.500H1z" fill="none" stroke="#fff"/><path d="M10.500 4.500c1.500 1.500 1.500 3.500 0 5M13 2.500c2.500 2.500 2.500 6.500 0 9M15 1c3 3 3 9 0 12" fill="none" stroke="#fff"/></svg>
      <svg class="t-note" viewBox="0 0 18 16"><path d="M0 0h18v12h-6l-3 3.500L6 12H0z" fill="#fff"/><path d="M3 3h12M3 6h12M3 9h12" stroke="#000"/></svg>
      <div class="clock"><span>1:00 PM</span><span>4/24/2018</span></div>
      <i class="show-desktop"></i>
    </div>
  </footer>
</div>
</body>
</html>
```
FILE: styles.css
```css
* { box-sizing: border-box; }
html, body { margin: 0; padding: 0; width: 1366px; height: 768px; overflow: hidden; background: #535353; }
i, b { display: block; font-style: normal; }
.sprite { display: none; }
.app { width: 1366px; height: 768px; display: flex; flex-direction: column; color: #d6d6d6; font-family: Roboto, "Liberation Sans", sans-serif; font-size: 10.5px; }

/* menu bar */
.menubar { height: 29px; flex: none; background: #535353; border-bottom: 1px solid #3c3c3c; display: flex; position: relative; }
.ps-logo { width: 47px; padding-left: 6px; font: 700 21px/26px "Open Sans", sans-serif; color: #6b9bcb; }
.menu { display: flex; gap: 17.5px; font: 12px/30px "Liberation Serif", serif; color: #dedede; }
.winctl { margin-left: auto; width: 104px; height: 18px; border-left: 1px solid #6a6a6a; border-bottom: 1px solid #6a6a6a; border-radius: 0 0 0 4px; display: flex; align-items: center; color: #c9c9c9; }
.wc { display: block; flex: none; }
.wc-min { width: 10px; height: 4px; margin: 6px 0 0 7px; }
.wc-max { width: 12px; height: 12px; margin: 0 0 0 17px; }
.wc-x { width: 11px; height: 11px; margin: 0 0 0 26px; }

/* options bar */
.options { height: 33px; flex: none; background: #535353; border-bottom: 1px solid #3c3c3c; display: flex; align-items: center; }
.opt-grip { width: 3px; height: 18px; margin-left: 5px; background: repeating-linear-gradient(0deg, #6c6c6c 0 1px, transparent 1px 2px); }
.opt-move { width: 18px; height: 18px; margin-left: 13px; color: #dcdcdc; }
.opt-chev { width: 8px; height: 5px; margin-left: 7px; color: #aaa; }
.sep { width: 1px; height: 23px; background: #3e3e3e; }
.sep-a { margin-left: 9px; }
.sep-b { margin-left: 8px; }
.sep-c { margin-left: 14px; }
.check { width: 11px; height: 11px; margin-left: 6px; border-radius: 2px; border: 1px solid #8c8c8c; background: #4a4a4a; display: block; }
.check.on { background: #d3d3d3; border-color: #d3d3d3; }
.check svg { display: block; width: 9px; height: 9px; }
.sep-b + .check { margin-left: 8px; }
.lbl { margin-left: 5px; color: #dcdcdc; white-space: nowrap; }
.lbl-auto { width: 53px; }
.lbl-show { width: 113px; }
.select { background: #434343; border: 1px solid #6b6b6b; border-radius: 3px; color: #dedede; display: flex; align-items: center; position: relative; }
.select svg { display: block; }
.sel-layer { width: 58px; height: 18px; margin-left: 13px; padding-left: 8px; }
.sel-layer svg { width: 8px; height: 5px; margin-left: auto; margin-right: 4px; color: #aaa; }
.aligns { display: flex; gap: 12px; color: #8f8f8f; }
.aligns svg { width: 14px; height: 14px; display: block; }
.ml12 { margin-left: 12px; }
.ml14 { margin-left: 14px; }
.ml20 { margin-left: 20px; }
.ml21 { margin-left: 21px; }
.lbl-3d { margin-left: 8px; width: 42px; color: #777; white-space: nowrap; }
.modes { display: flex; gap: 6px; margin-left: 17px; color: #8a8a8a; }
.modes svg { width: 20px; height: 20px; display: block; }
.opt-search { width: 18px; height: 18px; margin-left: auto; color: #dedede; transform: scaleX(-1); }
.sep-d { margin-left: 8px; }
.opt-work { width: 17px; height: 15px; margin-left: 9px; color: #cfcfcf; }
.opt-chev2 { width: 8px; height: 5px; margin: 0 8px 0 8px; color: #aaa; }

/* workspace */
.workspace { height: 666px; flex: none; display: flex; background: #3a3a3a; }

/* tool column */
.tools { width: 38px; flex: none; margin-right: 2px; background: #535353; color: #d6d6d6; display: flex; flex-direction: column; overflow: hidden; }
.collapse { height: 13px; background: #434343; border-bottom: 1px solid #3a3a3a; padding-left: 5px; }
.tri { display: block; font: 8px/11px "DejaVu Sans", sans-serif; color: #b8b8b8; letter-spacing: -1px; }
.grip { display: block; width: 18px; height: 4px; background: repeating-linear-gradient(90deg, #777 0 1px, transparent 1px 2px); }
.tool-grip { margin: 3px auto 11px; height: 3px; flex: none; }
.tool { height: 26px; flex: none; display: flex; align-items: center; justify-content: center; position: relative; }
.tool svg { width: 24px; height: 24px; display: block; }
.tool.active { height: 24px; margin: 0 3px 1px 4px; background: #383838; border: 1px solid #2f2f2f; border-radius: 3px; box-shadow: inset 0 0 0 1px #3f3f3f; }
.tool.corner::after { content: ""; position: absolute; right: 3px; bottom: 3px; border-style: solid; border-width: 0 0 4px 4px; border-color: transparent transparent #bbb transparent; }
.gradient { width: 16px; height: 13px; border: 1px solid #d2d2d2; background: linear-gradient(90deg, #111, #ddd); }
.tool-t { font: 700 21px/24px "Liberation Serif", serif; color: #d8d8d8; }
.colors { height: 53px; flex: none; position: relative; }
.mini-bg { position: absolute; left: 8px; top: 10px; width: 7px; height: 7px; background: #fff; border: 1px solid #222; }
.mini-fg { position: absolute; left: 4px; top: 6px; width: 7px; height: 7px; background: #111; outline: 1px solid #ddd; }
.swap { position: absolute; left: 22px; top: 5px; width: 11px; height: 11px; color: #ddd; }
.bgc { position: absolute; left: 15px; top: 31px; width: 19px; height: 20px; background: #000; border: 1px solid #fff; }
.fgc { position: absolute; left: 4px; top: 21px; width: 20px; height: 20px; background: #fff; border: 1px solid #2a2a2a; }
.mask { height: 29px; flex: none; padding: 8px 0 0 10px; }
.mask i { width: 17px; height: 13px; border: 1px solid #ddd; display: flex; align-items: center; justify-content: center; }
.mask b { width: 7px; height: 7px; border: 1px dotted #ddd; border-radius: 50%; }
.screenmode { width: 11px; height: 8px; margin: 7px 0 0 15px; border-top: 2px solid #ddd; flex: none; }

/* document */
.doc { width: 1045px; flex: none; display: flex; flex-direction: column; }
.tabs { height: 30px; flex: none; background: #424242; display: flex; border-bottom: 1px solid #3a3a3a; }
.tab { display: flex; align-items: center; height: 29px; padding: 1px 0 0 11px; font: 700 11px/28px "Liberation Serif", serif; letter-spacing: .15px; color: #9d9d9d; white-space: nowrap; }
.tab:first-child { width: 375px; background: #3f3f3f; border-right: 1px solid #333; }
.tab svg { width: 8px; height: 8px; margin-left: 8px; color: #c8c8c8; }
.tab.current { width: 293px; padding-left: 10px; background: #535353; color: #eee; }
.docbody { height: 619px; flex: none; display: flex; }
.docview { width: 1027px; flex: none; display: flex; flex-direction: column; }
.hruler { height: 16px; flex: none; display: flex; background: #494949; border-bottom: 1px solid #111; }
.rcorner { width: 17px; height: 15px; background: #4e4e4e; border-right: 1px solid #3a3a3a; background-image: radial-gradient(#777 .6px, transparent .7px); background-size: 3px 3px; }
.hticks { width: 1010px; height: 15px; overflow: hidden; display: flex; padding-left: 19px;
  background: repeating-linear-gradient(90deg, #777 0 1px, transparent 1px 9.833px) 19px 100% / 100% 3px no-repeat; }
.hticks span { flex: none; width: 59px; height: 15px; border-left: 1px solid #777; padding-left: 3px; font: 10px/15px "Liberation Sans", sans-serif; color: #a7aeb6; }
.vsplit { height: 603px; flex: none; display: flex; }
.vruler { width: 17px; flex: none; background: #494949 repeating-linear-gradient(180deg, #777 0 1px, transparent 1px 9.833px) 100% 2px / 4px 100% no-repeat; border-right: 1px solid #3a3a3a; overflow: hidden; font: 10px/11px "Liberation Sans", sans-serif; color: #a7aeb6; }
.vstart { height: 52px; }
.vruler span { display: block; height: 59px; border-top: 1px solid #777; padding: 2px 0 0 5px; }
.pasteboard { flex: 1; background: #282828; padding: 52px 0 0 255px; overflow: hidden; }
.artboard { width: 500px; height: 500px; background: #fff; }
.logo { display: block; width: 500px; height: 500px; }
.logo-project { font: 700 74px "Lato", sans-serif; fill: #000; stroke: #000; stroke-width: .7px; }
.logo-num { font: 700 199px "DejaVu Sans", sans-serif; letter-spacing: 10.7px; }
.vscroll { width: 18px; flex: none; background: #4b4b4b; border-left: 1px solid #3c3c3c; }
.status { height: 17px; flex: none; display: flex; background: #4a4a4a; border-top: 1px solid #3a3a3a; color: #ccc; }
.st-zoom { width: 46px; margin-left: 2px; background: #414141; padding-left: 12px; line-height: 15px; color: #ddd; }
.st-doc { width: 184px; background: #535353; padding-left: 47px; line-height: 15px; position: relative; display: flex; align-items: center; }
.st-doc svg { width: 6px; height: 11px; margin-left: auto; margin-right: 4px; color: #bbb; }

/* narrow dock */
.dock { width: 38px; flex: none; margin-right: 1px; background: #535353; display: flex; flex-direction: column; color: #d0d0d0; }
.dock-top { height: 13px; background: #434343; flex: none; border-bottom: 1px solid #3a3a3a; padding-left: 25px; }
.arrows-l, .arrows-r { display: block; font: 8px/11px "DejaVu Sans", sans-serif; color: #b8b8b8; letter-spacing: -1px; }
.arrows-r { margin-left: 226px; }
.dock-group { flex: none; border-bottom: 2px solid #3c3c3c; display: flex; flex-direction: column; align-items: center; padding-left: 3px; }
.h40 { height: 41px; }
.h68 { height: 69px; }
.dock-group .grip { margin-top: 3px; height: 3px; flex: none; }
.dock-ic { width: 22px; height: 22px; margin-top: 6px; display: block; }
.dock-a { font: 20px/22px "Open Sans", sans-serif; margin-top: 7px; display: flex; align-items: center; }
.dock-a b { width: 1px; height: 16px; margin-left: 1px; background: #ccc; }
.dock-p { font: 700 18px/20px "Liberation Sans", sans-serif; margin-top: 6px; }

/* panels */
.panels { width: 242px; flex: none; margin-left: 0; display: flex; flex-direction: column; background: #3a3a3a; }
.panel-head { height: 13px; flex: none; background: #434343; border-bottom: 1px solid #3a3a3a; }
.swatches { height: 300px; flex: none; background: #535353; }
.ptabs { height: 28px; margin-left: 2px; background: #424242; display: flex; position: relative; font: 700 10px/29px "Liberation Serif", serif; letter-spacing: .5px; color: #9d9d9d; }
.ptab { display: block; height: 28px; border-right: 1px solid #3a3a3a; text-align: center; }
.ptab.on { background: #535353; color: #e9e9e9; }
.t-color { width: 44px; }
.t-swatches { width: 58px; }
.t-layers { width: 48px; }
.t-channels { width: 59px; }
.t-paths { width: 43px; }
.burger { position: absolute; right: 7px; top: 10px; width: 10px; height: 8px; background: repeating-linear-gradient(180deg, #ccc 0 1px, transparent 1px 2px); }
.sw-body { height: 272px; background: linear-gradient(90deg, #535353 225px, #4f4f4f 225px); padding: 8px 0 0 2px; }
.recent { margin-left: 4px; width: 227px; height: 19px; background: #404040; padding: 2px; display: grid; grid-template-columns: repeat(14, 15px); column-gap: 1px; }
.recent i { height: 15px; }
.swgrid { margin-top: 4px; width: 216px; display: grid; grid-template-columns: repeat(12, 17px); grid-auto-rows: 17px; gap: 1px; padding-bottom: 1px; }
.swgrid i { outline: 1px solid #3f3f3f; }
.panel-head2 { height: 15px; flex: none; background: #434343; margin-left: 2px; display: flex; align-items: center; color: #cfcfcf; }
.ph-arrows { margin-left: 211px; font: 8px/12px "DejaVu Sans", sans-serif; letter-spacing: -1px; width: 14px; }
.panel-head2 svg { width: 8px; height: 8px; margin-left: 4px; color: #c4c4c4; }

.layers { height: 338px; flex: none; margin-left: 2px; background: #535353; display: flex; flex-direction: column; }
.layers .ptabs { margin-left: 0; flex: none; }
.l-row { flex: none; display: flex; align-items: center; border-bottom: 1px solid #454545; padding-left: 5px; }
.l-filter { height: 31px; padding-top: 3px; }
.l-blend { height: 27px; }
.l-lock { height: 28px; }
.sel-kind { width: 90px; height: 18px; padding-left: 8px; }
.kind-s { width: 11px; height: 11px; margin-right: 3px; transform: scaleX(-1); }
.s-chev { width: 8px; height: 5px; margin-left: auto; margin-right: 4px; color: #aaa; }
.sel-normal { width: 130px; height: 18px; padding-left: 8px; }
.f-icons { display: flex; align-items: center; margin-left: 9px; color: #dcdcdc; width: 110px; gap: 12px; }
.f-icons svg { width: 12px; height: 12px; display: block; flex: none; }
.f-t { width: 12px; font: 700 14px/14px "Liberation Serif", serif; text-align: center; }
.toggle { width: 8px; height: 18px; border: 1px solid #7a7a7a; border-radius: 5px; margin-left: 12px; position: relative; }
.toggle b { position: absolute; left: -1px; top: -2px; width: 8px; height: 8px; border-radius: 50%; background: #e8e8e8; }
.lbl-r { color: #cfcfcf; white-space: nowrap; }
.lbl-op { margin-left: 8px; width: 40px; }
.lbl-lock { margin-left: 2px; width: 36px; }
.lbl-fill { margin-left: 13px; width: 18px; }
.num { width: 52px; height: 18px; background: #3d3d3d; border-radius: 3px; display: flex; align-items: center; padding-left: 5px; color: #e4e4e4; }
.num i { margin-left: auto; width: 16px; height: 18px; background: #535353; border: 1px solid #3d3d3d; display: flex; align-items: center; justify-content: center; color: #c4c4c4; }
.num svg { width: 8px; height: 5px; display: block; }
.lock-icons { display: flex; gap: 9px; width: 107px; align-items: center; color: #d9d9d9; }
.lock-icons svg { width: 13px; height: 13px; flex: none; display: block; }
.lock-icons .dim { color: #8f8f8f; }
.l-list { height: 197px; flex: none; display: flex; overflow: hidden; }
.l-items { width: 224px; flex: none; display: flex; flex-direction: column; }
.layer { height: 39px; flex: none; display: flex; border-bottom: 1px solid #3f3f3f; }
.l-partial { height: 12px; }
.l-cut { height: 29px; border-bottom: 0; overflow: hidden; align-items: flex-start; }
.l-eye { width: 31px; flex: none; height: 100%; border-right: 1px solid #3f3f3f; display: flex; align-items: center; justify-content: center; }
.l-eye svg { width: 15px; height: 11px; }
.l-main { flex: 1; display: flex; align-items: center; padding-left: 20px; height: 100%; }
.layer.sel .l-main { background: #6a6a6a; }
.l-tglyph { width: 30px; text-align: center; font: 400 20px/22px "Liberation Serif", serif; color: #cdcdcd; }
.l-name { margin-left: 11px; padding-top: 2px; font-size: 10px; color: #e2e2e2; white-space: nowrap; }
.thumb { width: 31px; height: 32px; flex: none; position: relative; border: 1px solid #000; background: #fff repeating-conic-gradient(#cfcfcf 0 25%, #fff 0 50%) 0 0 / 10px 10px; }
.badge { position: absolute; right: -1px; bottom: -1px; width: 13px; height: 13px; background: #535353; border: 1px solid #000; border-width: 1px 0 0 1px; }
.sel .badge { background: #6a6a6a; }
.corners { position: absolute; left: -3px; top: -3px; width: 36px; height: 36px; }
.mini-shield { position: absolute; left: 7px; top: 9px; width: 15px; height: 16px; background: #000; }
.l-cut .l-main { align-items: flex-start; padding-top: 4px; }
.l-cut .l-eye { align-items: flex-start; padding-top: 14px; height: 29px; }
.l-cut .l-name { margin-top: 8px; }
.l-scroll { width: 15px; flex: none; margin-left: 1px; background: #4d4d4d; border-left: 1px solid #3f3f3f; position: relative; color: #8b8b8b; }
.sc-thumb { position: absolute; left: 1px; top: 45px; width: 12px; height: 108px; background: #6e6e6e; }
.sc-up, .sc-down { position: absolute; left: 3px; width: 8px; height: 5px; }
.sc-up { top: 8px; transform: rotate(180deg); }
.sc-down { top: 185px; }
.l-foot { height: 26px; flex: none; border-top: 1px solid #3f3f3f; border-bottom: 1px solid #2f2f2f; display: flex; align-items: center; padding-left: 36px; gap: 14px; color: #cfcfcf; }
.l-foot svg { width: 13px; height: 12px; display: block; flex: none; }
.l-foot .dim2 { width: 14px; color: #868686; }
.fx { font: italic 15px/18px "Liberation Serif", serif; width: 13px; }

/* taskbar */
.taskbar { height: 40px; flex: none; background: #050506; display: flex; }
.tb-cell { width: 49px; flex: none; height: 40px; display: flex; align-items: center; justify-content: center; position: relative; }
.tb-cell:nth-child(-n+2) { width: 48px; }
.tb-tv { width: 49px; }
.tb-ic { width: 24px; height: 24px; display: block; }
.start { width: 20px; height: 20px; }
.search { width: 20px; height: 20px; }
.tb-active { background: #2e3236; }
.tb-cell:nth-child(7)::after, .tb-cell:nth-child(8)::after, .tb-active::after { content: ""; position: absolute; left: 4px; right: 5px; bottom: 0; height: 2px; background: #76b9ed; }
.tb-active::after { left: 0; right: 0; }
.app-tile { width: 22px; height: 22px; display: block; border: 2px solid; font: 11px/18px "Open Sans", sans-serif; text-align: center; background: #06141c; }
.app-ps { color: #31a8ff; border-color: #0c9bdb; }
.app-ai { color: #ff7c00; border-color: #d66b00; background: #1c0d00; }
.tray { margin-left: auto; display: flex; align-items: center; height: 40px; width: 196px; position: relative; color: #fff; }
.t-up { width: 12px; height: 7px; margin-left: 6px; }
.t-bat { width: 16px; height: 9px; margin-left: 10px; }
.t-wifi { width: 20px; height: 16px; margin-left: 6px; }
.t-vol { width: 17px; height: 14px; margin-left: 5px; }
.t-note { width: 17px; height: 16px; margin-left: 8px; }
.clock { width: 68px; margin-left: 6px; display: flex; flex-direction: column; align-items: center; font: 12px/18px "Liberation Serif", serif; color: #fff; }
.show-desktop { width: 1px; height: 40px; margin-left: 4px; background: #3a3a3a; }
```
